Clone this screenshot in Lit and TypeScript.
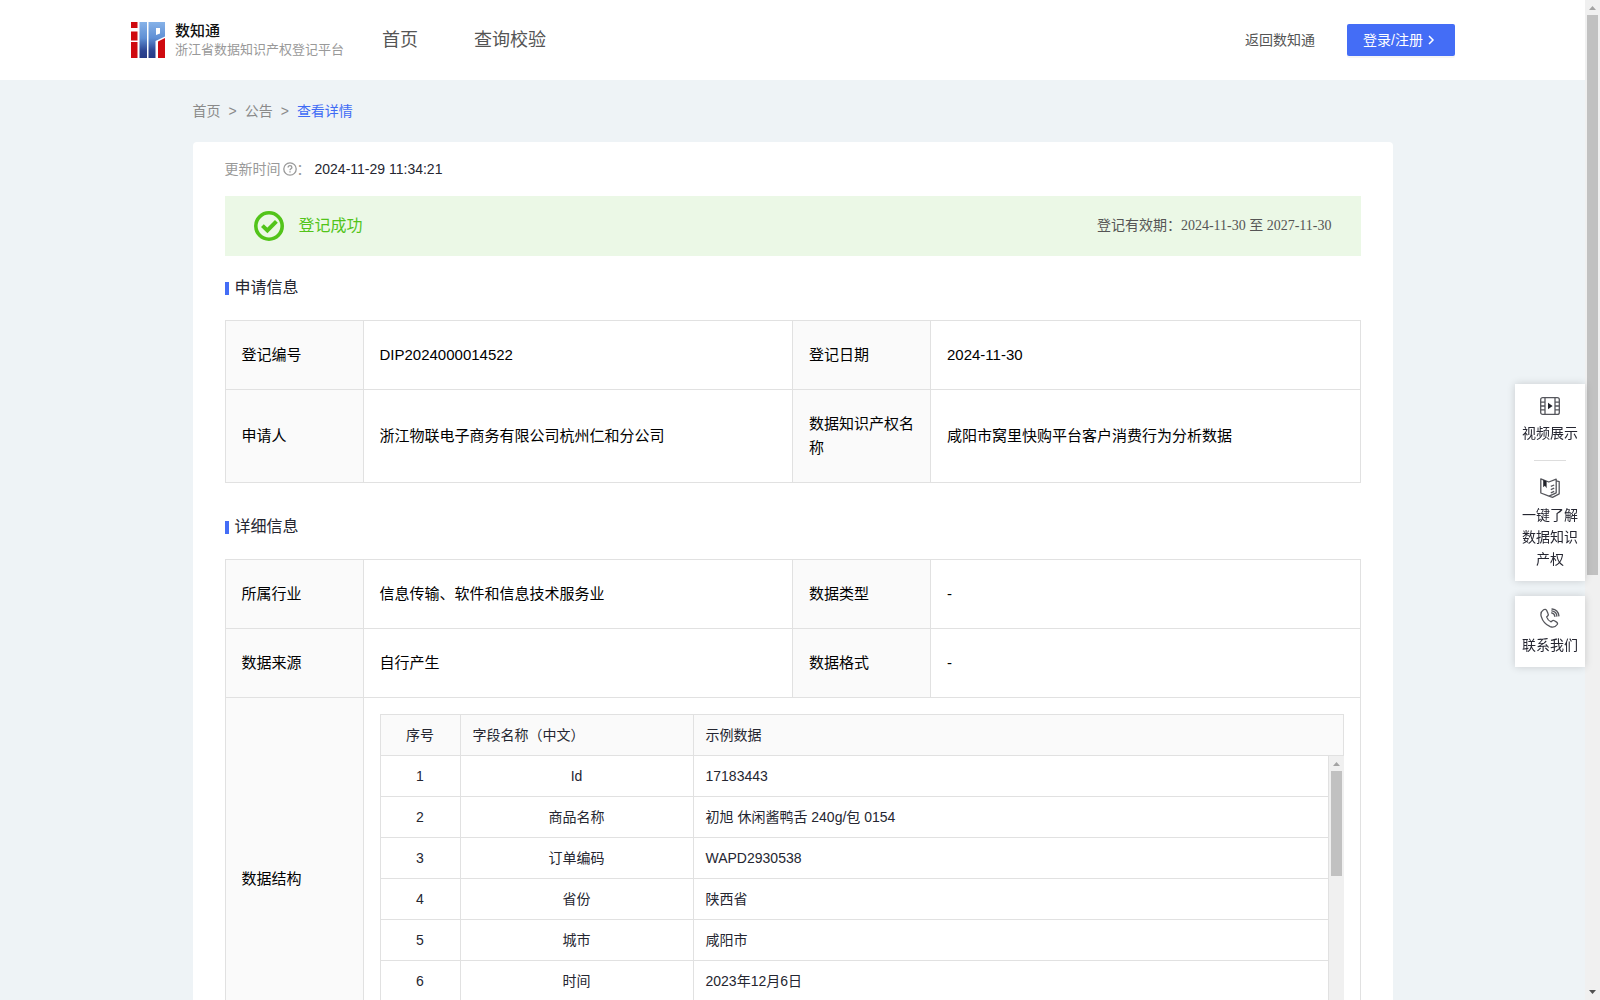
import { LitElement, html, css, svg } from "lit";
import { customElement, property } from "lit/decorators.js";

type Pair = [string, string, string, string];

const APPLY_ROWS: Pair[] = [
  ["登记编号", "DIP2024000014522", "登记日期", "2024-11-30"],
  ["申请人", "浙江物联电子商务有限公司杭州仁和分公司", "数据知识产权名称", "咸阳市窝里快购平台客户消费行为分析数据"],
];

const DETAIL_ROWS: Pair[] = [
  ["所属行业", "信息传输、软件和信息技术服务业", "数据类型", "-"],
  ["数据来源", "自行产生", "数据格式", "-"],
];

const FIELDS: [string, string][] = [
  ["Id", "17183443"],
  ["商品名称", "初旭 休闲酱鸭舌 240g/包 0154"],
  ["订单编码", "WAPD2930538"],
  ["省份", "陕西省"],
  ["城市", "咸阳市"],
  ["时间", "2023年12月6日"],
];

const videoIcon = svg`<svg width="20" height="20" viewBox="0 0 20 20" fill="none" stroke="#55565c" stroke-width="1.3" aria-hidden="true">
  <rect x="0.7" y="1.6" width="18.6" height="16.8" rx="2"/><path d="M5 1.6v16.8M15 1.6v16.8M.7 6.2H5M.7 10H5M.7 13.8H5M15 6.2h4.3M15 10h4.3M15 13.8h4.3"/>
  <path d="M8 6.8v6.4l4.6-3.2z" fill="#22232b" stroke="none"/></svg>`;
const bookIcon = svg`<svg width="20" height="20" viewBox="0 0 20 20" fill="none" stroke="#55565c" stroke-width="1.3" stroke-linejoin="round" aria-hidden="true">
  <path d="M.8 .8 8.800 4l7.400-2.800v13.600L9 18.200.8 15zM16.400 2.800l2.800.8v12.200L12.500 19.300 9 18.200"/>
  <path d="M3.200 1.800v7.400l1.700-1.400 1.700 2.400V3.200z" fill="#22232b" stroke="none"/><path d="m10.800 8.400 3.400-1.400M10.800 11.600l3.400-1.400M10.800 14.800l3.400-1.400"/></svg>`;
const phoneIcon = svg`<svg width="20" height="20" viewBox="0 0 20 20" fill="none" stroke="#55565c" stroke-width="1.3" stroke-linecap="round" stroke-linejoin="round" aria-hidden="true">
  <path d="M3.600 1.800C1.200 3.400.4 5.600 1.200 8.400c1.400 4.800 4.600 8.400 9 10.300 2.800 1 5.400.2 7-2.200.6-1 .3-1.800-.6-2.400l-2.200-1.400c-.9-.5-1.700-.4-2.400.3l-.9.900c-2-.8-3.800-2.900-4.500-5l1-.9c.8-.7.9-1.500.4-2.400L6.700 2.500c-.7-1.200-1.900-1.500-3.100-.7z"/>
  <path d="M11.600 4.800c1.800.4 3 1.700 3.300 3.500M11.800 2.900c2.800.4 4.800 2.400 5.100 5.200M12 1c3.800.4 6.400 3.200 6.900 6.800"/></svg>`;

@customElement("scroll-rail")
export class ScrollRail extends LitElement {
  @property({ type: Number }) shown = 50;

  static styles = css`
    :host {
      display: flex;
      flex-direction: column;
      flex: 0 0 15px;
      background: #f0f0f0;
    }
    .arrow {
      display: block;
      flex: none;
    }
    .groove {
      flex: 1;
      padding: 0 2px;
    }
    .thumb {
      background: #c1c1c1;
    }
  `;

  render() {
    return html`
      <svg class="arrow" width="15" height="15" viewBox="0 0 15 15"><path d="M4 10 7.500 6 11 10z" fill="#a3a3a3" /></svg>
      <div class="groove"><div class="thumb" style="height:${this.shown}%"></div></div>
      <svg class="arrow" width="15" height="15" viewBox="0 0 15 15"><path d="M4 5 7.500 9 11 5z" fill="#505050" /></svg>
    `;
  }
}

@customElement("app-root")
export class AppRoot extends LitElement {
  static styles = css`
    :host {
      display: flex;
      height: 100vh;
      font-family: "Liberation Sans", "Noto Sans CJK SC", sans-serif;
      font-size: 14px;
      line-height: 22px;
      color: #252631;
    }
    * {
      box-sizing: border-box;
    }
    a {
      color: inherit;
      text-decoration: none;
    }
    .page {
      flex: 1;
      min-width: 0;
      overflow: auto;
      scrollbar-width: none;
      background: #eef3f6;
    }
    .header {
      display: flex;
      align-items: center;
      height: 80px;
      padding: 0 130px;
      background: #fff;
    }
    .brand {
      display: flex;
      align-items: center;
      gap: 9px;
    }
    .brand-text {
      display: flex;
      flex-direction: column;
    }
    .brand-name {
      font-size: 15px;
      line-height: 20px;
      font-weight: 500;
      color: #111;
    }
    .brand-sub {
      font-size: 13px;
      line-height: 18px;
      color: #999;
    }
    .nav {
      display: flex;
      gap: 56px;
      margin-left: 38px;
      font-size: 18px;
      line-height: 26px;
      color: #555;
    }
    .actions {
      display: flex;
      align-items: center;
      gap: 32px;
      margin-left: auto;
      color: #555;
    }
    .login {
      display: flex;
      align-items: center;
      gap: 3px;
      height: 32px;
      padding: 0 19px 0 16px;
      border: 0;
      border-radius: 2px;
      background: #446df6;
      color: #fff;
      font: inherit;
      box-shadow: 0 2px 0 rgba(0, 0, 0, 0.04);
    }
    .main {
      max-width: 1200px;
      margin: 0 auto;
    }
    .crumbs {
      display: flex;
      gap: 8px;
      padding: 20px 0;
      color: #8a8a8a;
    }
    .crumbs .current {
      color: #3f6bf5;
    }
    .card {
      padding: 16px 32px 32px;
      border-radius: 4px;
      background: #fff;
    }
    .updated {
      display: flex;
      align-items: center;
    }
    .updated-label {
      display: flex;
      align-items: center;
      gap: 2px;
      color: #999;
    }
    .updated-value {
      margin-left: 4px;
    }
    .status {
      display: flex;
      align-items: center;
      height: 60px;
      margin-top: 16px;
      padding: 0 29px;
      background: #ebf8e6;
    }
    .status-text {
      margin-left: 15px;
      font-size: 16px;
      color: #52c41a;
    }
    .validity {
      margin-left: auto;
      font-family: "Liberation Serif", "Noto Sans CJK SC", serif;
      color: #555;
    }
    .section-title {
      display: flex;
      align-items: center;
      gap: 6px;
      margin: 20px 0;
      font-size: 16px;
      line-height: 24px;
      font-weight: 400;
    }
    .section-title::before {
      content: "";
      width: 4px;
      height: 13px;
      background: #446df6;
    }
    .info + .section-title {
      margin-top: 32px;
    }
    table {
      width: 100%;
      table-layout: fixed;
      border-collapse: collapse;
    }
    .info {
      font-size: 15px;
      line-height: 24px;
      color: #000;
    }
    th,
    td {
      border: 1px solid #e1e1e1;
      font-weight: 400;
      text-align: left;
    }
    .info > tbody > tr > th,
    .info > tbody > tr > td {
      padding: 22px 16px;
    }
    .info > tbody > tr > .nest {
      padding: 16px;
    }
    th {
      background: #fafafa;
    }
    .label-col {
      width: 138px;
    }
    .fields {
      font-size: 14px;
      line-height: 20px;
      color: #252631;
    }
    .fields th,
    .fields td {
      padding: 10px 12px;
    }
    .fields .no,
    .fields td.name {
      text-align: center;
    }
    .no-col {
      width: 80px;
    }
    .name-col {
      width: 233px;
    }
    .scroller {
      display: flex;
      height: 288px;
      border-bottom: 1px solid #e1e1e1;
    }
    .rows {
      flex: 1;
      overflow: auto;
      scrollbar-width: none;
    }
    .rows tr:first-child td {
      border-top: 0;
    }
    .side {
      position: fixed;
      top: 384px;
      right: 15px;
      display: flex;
      flex-direction: column;
      gap: 15px;
      width: 70px;
    }
    .side-card {
      display: flex;
      flex-direction: column;
      align-items: center;
      padding: 12px 7px 11px;
      background: #fff;
      box-shadow: 0 0 8px rgba(0, 0, 0, 0.16);
    }
    .side-item {
      display: flex;
      flex-direction: column;
      align-items: center;
      gap: 6px;
      text-align: center;
    }
    .side-rule {
      width: 32px;
      height: 1px;
      margin: 16px 0 17px;
      border: 0;
      background: #ddd;
    }
  `;

  private infoRow([a, b, c, d]: Pair) {
    return html`<tr>
      <th scope="row">${a}</th>
      <td>${b}</td>
      <th scope="row">${c}</th>
      <td>${d}</td>
    </tr>`;
  }

  private infoCols() {
    return html`<colgroup>
      <col class="label-col" />
      <col />
      <col class="label-col" />
      <col />
    </colgroup>`;
  }

  private fieldCols() {
    return html`<colgroup>
      <col class="no-col" />
      <col class="name-col" />
      <col />
    </colgroup>`;
  }

  render() {
    return html`
      <div class="page">
        <header class="header">
          <a class="brand" href="#">
            <svg width="36" height="38" viewBox="0 0 36 38" aria-hidden="true">
              <defs>
                <linearGradient id="blue" gradientUnits="userSpaceOnUse" x1="0" y1="1" x2="0" y2="37">
                  <stop offset="0" stop-color="#86b2e8" />
                  <stop offset="0.45" stop-color="#5f8fd4" />
                  <stop offset="0.8" stop-color="#2d4593" />
                  <stop offset="1" stop-color="#263a86" />
                </linearGradient>
              </defs>
              <path d="M1 1h6.500v6H1zM1 10.500h6.500v9H1zM1 21h6.500v16H1z" fill="#cf0a10" />
              <path d="M9.500 1h7.500v36H9.500z" fill="url(#blue)" />
              <path d="M18.500 1H35v14.500l-9.500 4.500v17h-7zM26 7v7l4-1.500V7z" fill="url(#blue)" fill-rule="evenodd" />
              <path d="M28 20.500l7-3.500v20h-7z" fill="#cf0a10" />
            </svg>
            <span class="brand-text">
              <span class="brand-name">数知通</span>
              <span class="brand-sub">浙江省数据知识产权登记平台</span>
            </span>
          </a>
          <nav class="nav">
            <a href="#">首页</a>
            <a href="#">查询校验</a>
          </nav>
          <div class="actions">
            <a href="#">返回数知通</a>
            <button class="login" type="button">
              <span>登录/注册</span>
              <svg width="10" height="10" viewBox="0 0 10 10" fill="none" stroke="#fff" stroke-width="1.5" aria-hidden="true">
                <path d="M3 1l4 4-4 4" />
              </svg>
            </button>
          </div>
        </header>

        <main class="main">
          <nav class="crumbs">
            <a href="#">首页</a><span>&gt;</span><a href="#">公告</a><span>&gt;</span><a class="current" href="#">查看详情</a>
          </nav>
          <div class="card">
            <div class="updated">
              <span class="updated-label">
                更新时间
                <svg width="14" height="14" viewBox="0 0 14 14" fill="none" stroke="#999" stroke-width="1.3" aria-hidden="true">
                  <circle cx="7" cy="7" r="6.2" />
                  <path d="M5.100 5.600c0-1.200.8-1.900 1.900-1.900s1.900.7 1.900 1.700c0 1.300-1.900 1.400-1.900 2.800M7 9.300v1.300" />
                </svg></span
              ><span class="updated-label">：</span>
              <span class="updated-value">2024-11-29 11:34:21</span>
            </div>
            <div class="status">
              <svg width="30" height="30" viewBox="0 0 30 30" fill="none" stroke="#52c41a" aria-hidden="true">
                <circle cx="15" cy="15" r="13.2" stroke-width="3.6" />
                <path d="M8.400 14.600l5 4.800 9-9" stroke-width="4" />
              </svg>
              <span class="status-text">登记成功</span>
              <span class="validity">登记有效期：2024-11-30 至 2027-11-30</span>
            </div>

            <h2 class="section-title">申请信息</h2>
            <table class="info">
              ${this.infoCols()}
              <tbody>
                ${APPLY_ROWS.map((r) => this.infoRow(r))}
              </tbody>
            </table>

            <h2 class="section-title">详细信息</h2>
            <table class="info">
              ${this.infoCols()}
              <tbody>
                ${DETAIL_ROWS.map((r) => this.infoRow(r))}
                <tr>
                  <th scope="row">数据结构</th>
                  <td class="nest" colspan="3">
                    <table class="fields">
                      ${this.fieldCols()}
                      <thead>
                        <tr>
                          <th class="no" scope="col">序号</th>
                          <th scope="col">字段名称（中文）</th>
                          <th scope="col">示例数据</th>
                        </tr>
                      </thead>
                    </table>
                    <div class="scroller">
                      <div class="rows">
                        <table class="fields">
                          ${this.fieldCols()}
                          <tbody>
                            ${FIELDS.map(
                              ([name, sample], i) => html`<tr>
                                <td class="no">${i + 1}</td>
                                <td class="name">${name}</td>
                                <td>${sample}</td>
                              </tr>`,
                            )}
                          </tbody>
                        </table>
                      </div>
                      <scroll-rail .shown=${41} aria-hidden="true"></scroll-rail>
                    </div>
                  </td>
                </tr>
              </tbody>
            </table>
          </div>
        </main>
      </div>
      <scroll-rail .shown=${57.7} aria-hidden="true"></scroll-rail>

      <aside class="side">
        <div class="side-card">
          <a class="side-item" href="#">${videoIcon}<span>视频展示</span></a>
          <hr class="side-rule" />
          <a class="side-item" href="#">${bookIcon}<span>一键了解数据知识产权</span></a>
        </div>
        <div class="side-card">
          <a class="side-item" href="#">${phoneIcon}<span>联系我们</span></a>
        </div>
      </aside>
    `;
  }
}
